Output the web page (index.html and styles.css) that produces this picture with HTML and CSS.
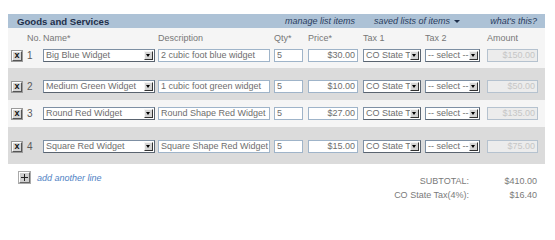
FILE: index.html
```html
<!DOCTYPE html>
<html>
<head>
<meta charset="utf-8">
<link rel="stylesheet" href="styles.css">
</head>
<body>
<div class="panel">
  <div class="titlebar">
    <span class="title">Goods and Services</span>
    <a class="tlink manage">manage list items</a>
    <a class="tlink saved">saved lists of items <span class="tri"></span></a>
    <a class="tlink whats">what's this?</a>
  </div>
  <div class="row labels">
    <span></span>
    <span class="num">No.</span>
    <span>Name*</span>
    <span>Description</span>
    <span>Qty*</span>
    <span>Price*</span>
    <span>Tax 1</span>
    <span>Tax 2</span>
    <span>Amount</span>
  </div>

  <div class="row r1 light">
    <span class="xbtn">x</span>
    <span class="num">1</span>
    <div class="sel w-name"><span class="val">Big Blue Widget</span><span class="arr"></span></div>
    <div class="inp w-desc">2 cubic foot blue widget</div>
    <div class="inp w-qty">5</div>
    <div class="inp w-price right">$30.00</div>
    <div class="sel w-tax1"><span class="val">CO State T</span><span class="arr"></span></div>
    <div class="sel w-tax2"><span class="val">-- select --</span><span class="arr"></span></div>
    <div class="inp w-amt right dis">$150.00</div>
  </div>

  <div class="row r2 grey">
    <span class="xbtn">x</span>
    <span class="num">2</span>
    <div class="sel w-name"><span class="val">Medium Green Widget</span><span class="arr"></span></div>
    <div class="inp w-desc">1 cubic foot green widget</div>
    <div class="inp w-qty">5</div>
    <div class="inp w-price right">$10.00</div>
    <div class="sel w-tax1"><span class="val">CO State T</span><span class="arr"></span></div>
    <div class="sel w-tax2"><span class="val">-- select --</span><span class="arr"></span></div>
    <div class="inp w-amt right dis">$50.00</div>
  </div>

  <div class="row r3 light">
    <span class="xbtn">x</span>
    <span class="num">3</span>
    <div class="sel w-name"><span class="val">Round Red Widget</span><span class="arr"></span></div>
    <div class="inp w-desc">Round Shape Red Widget</div>
    <div class="inp w-qty">5</div>
    <div class="inp w-price right">$27.00</div>
    <div class="sel w-tax1"><span class="val">CO State T</span><span class="arr"></span></div>
    <div class="sel w-tax2"><span class="val">-- select --</span><span class="arr"></span></div>
    <div class="inp w-amt right dis">$135.00</div>
  </div>

  <div class="row r4 grey">
    <span class="xbtn">x</span>
    <span class="num">4</span>
    <div class="sel w-name"><span class="val">Square Red Widget</span><span class="arr"></span></div>
    <div class="inp w-desc">Square Shape Red Widget</div>
    <div class="inp w-qty">5</div>
    <div class="inp w-price right">$15.00</div>
    <div class="sel w-tax1"><span class="val">CO State T</span><span class="arr"></span></div>
    <div class="sel w-tax2"><span class="val">-- select --</span><span class="arr"></span></div>
    <div class="inp w-amt right dis">$75.00</div>
  </div>

  <div class="footer">
    <div class="addline">
      <span class="plus"><svg width="7" height="7" viewBox="0 0 7 7"><path d="M3 0h1v3h3v1H4v3H3V4H0V3h3z" fill="#222"/></svg></span>
      <a class="addlink">add another line</a>
    </div>
    <div class="totals">
      <span class="tl">SUBTOTAL:</span><span class="tv">$410.00</span>
      <span class="tl">CO State Tax(4%):</span><span class="tv">$16.40</span>
    </div>
  </div>
</div>
</body>
</html>
```
FILE: styles.css
```css
body {
  margin: 14px 0 0 8px;
  background: #ffffff;
  font-family: "Liberation Sans", Arial, sans-serif;
  font-size: 9px;
  color: #707070;
}
.panel {
  width: 537px;
}
.titlebar {
  height: 14px;
  background: #adc2d6;
  display: flex;
  align-items: center;
  color: #1f2f4a;
}
.title {
  font-weight: bold;
  font-size: 9.6px;
  padding-left: 9px;
  width: 268px;
}
.tlink {
  font-style: italic;
  font-size: 9px;
  color: #2a3c5e;
}
.manage { margin-right: 19px; }
.saved { display: flex; align-items: center; }
.tri {
  display: inline-block;
  width: 0; height: 0;
  border-left: 3px solid transparent;
  border-right: 3px solid transparent;
  border-top: 3px solid #1f2f4a;
  margin-left: 4px;
}
.whats { margin-left: auto; margin-right: 8px; }

.row {
  display: grid;
  grid-template-columns: 10px 21px 115px 116px 34px 55px 62px 62px 51px;
  padding-left: 4px;
  align-items: center;
}
.labels {
  height: 18px;
  padding-top: 5px;
  box-sizing: border-box;
  align-items: start;
  line-height: 11px;
  background: #f5f5f5;
  color: #777;
}
.light { background: #f5f5f5; }
.grey { background: #dbdbdb; }
.r1 { padding-top: 3px; padding-bottom: 6px; }
.r2 { padding-top: 12px; padding-bottom: 7px; }
.r3 { padding-top: 7px; padding-bottom: 7px; }
.r4 { padding-top: 13px; padding-bottom: 11px; }

.num { padding-left: 5px; }
.row:not(.labels) .num { font-size: 10px; color: #5a5a5a; }

.xbtn {
  width: 10px;
  height: 10px;
  box-sizing: border-box;
  border: 1px solid;
  border-color: #fff #555 #555 #fff;
  background: #d6d6d6;
  outline: 1px solid #9a9a9a;
  font-weight: bold;
  font-size: 9px;
  line-height: 7px;
  text-align: center;
  color: #111;
}

.inp, .sel {
  height: 13px;
  box-sizing: border-box;
  background: #fff;
  line-height: 11px;
  white-space: nowrap;
  color: #6e6e6e;
}
.inp {
  border: 1px solid #9fb4c9;
  padding: 0 2px;
  overflow: hidden;
}
.right { text-align: right; }
.dis {
  background: #ececec;
  color: #c6c6c6;
  border-color: #b5c2cf;
}
.sel {
  border: 1px solid;
  border-color: #7d8fa3 #5a6470 #5a6470 #7d8fa3;
  display: flex;
  position: relative;
}
.sel .val {
  padding-left: 2px;
  font-size: 9px;
}
.sel .arr {
  position: absolute;
  right: 1px;
  top: 1px;
  width: 9px;
  height: 9px;
  box-sizing: border-box;
  background: #d4d4d4;
  border: 1px solid;
  border-color: #f4f4f4 #333 #333 #f4f4f4;
}
.sel .arr::after {
  content: "";
  position: absolute;
  left: 1px;
  top: 2px;
  border-left: 2.5px solid transparent;
  border-right: 2.5px solid transparent;
  border-top: 3px solid #000;
}
.w-name { width: 112px; }
.w-desc { width: 112px; }
.w-qty { width: 29px; }
.w-price { width: 50px; }
.w-tax1 { width: 58px; }
.w-tax2 { width: 55px; }
.w-amt { width: 51px; }

.footer {
  display: flex;
  justify-content: space-between;
}
.addline {
  display: flex;
  align-items: center;
  padding-left: 11px;
  padding-top: 8px;
  align-self: flex-start;
}
.plus {
  width: 11px;
  height: 11px;
  box-sizing: border-box;
  border: 1px solid;
  border-color: #fff #666 #666 #fff;
  outline: 1px solid #aaa;
  background: #cfcfcf;
  display: flex;
  align-items: center;
  justify-content: center;
}
.addlink {
  font-style: italic;
  color: #4f82c4;
  margin-left: 7px;
  font-size: 9px;
}
.totals {
  display: grid;
  grid-template-columns: auto 68px;
  padding-top: 10px;
  padding-right: 8px;
  line-height: 14px;
  color: #7a7a7a;
  text-align: right;
}
```
